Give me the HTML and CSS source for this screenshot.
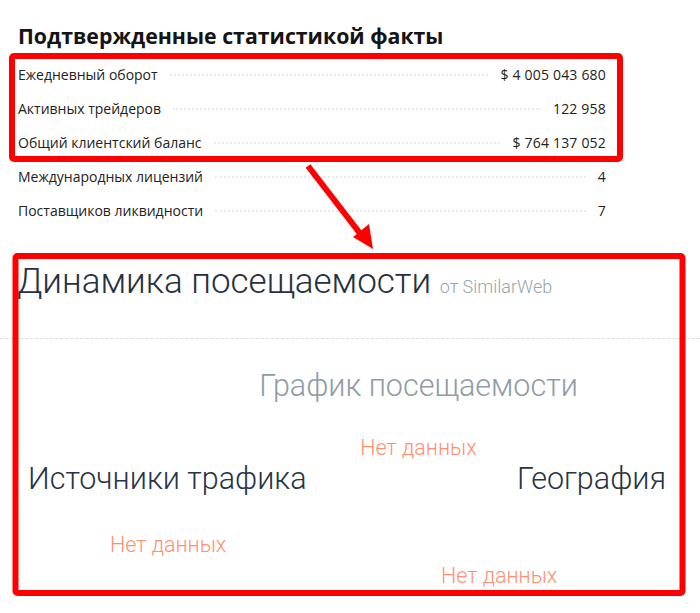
FILE: index.html
```html
<!DOCTYPE html>
<html lang="ru">

<head>
    <meta charset="UTF-8">
    <meta name="viewport" content="width=device-width, initial-scale=1.0">
    <title>Статистика брокера</title>
    <link rel="stylesheet" href="styles.css">
</head>

<body>
    <div class="facts">
        <h2 class="facts-title">Подтвержденные статистикой факты</h2>
        <ul class="facts-list">
            <li><span class="label">Ежедневный оборот</span><span class="leader"></span><span class="value">$ 4 005 043 680</span></li>
            <li><span class="label">Активных трейдеров</span><span class="leader"></span><span class="value">122 958</span></li>
            <li><span class="label">Общий клиентский баланс</span><span class="leader"></span><span class="value">$ 764 137 052</span></li>
            <li><span class="label">Международных лицензий</span><span class="leader"></span><span class="value">4</span></li>
            <li><span class="label">Поставщиков ликвидности</span><span class="leader"></span><span class="value">7</span></li>
        </ul>
    </div>

    <div class="traffic">
        <h2 class="traffic-title">Динамика посещаемости <small>от SimilarWeb</small></h2>
        <div class="traffic-body">
            <div class="chart-visits">
                <h3 class="block-title muted">График посещаемости</h3>
                <p class="no-data">Нет данных</p>
            </div>
            <div class="chart-pair">
                <h3 class="block-title">Источники трафика</h3>
                <h3 class="block-title">География</h3>
            </div>
            <p class="no-data sources-empty">Нет данных</p>
            <p class="no-data geo-empty">Нет данных</p>
        </div>
    </div>

    <!-- пометки поверх скриншота -->
    <svg class="marks" width="700" height="613" viewBox="0 0 700 613">
        <rect x="12" y="56" width="608" height="103" rx="2" />
        <rect x="15.5" y="256" width="667" height="337" rx="2" />
        <line x1="308" y1="166" x2="362" y2="236" />
        <polygon class="head" points="373,249 353,237 369,224" />
    </svg>
</body>

</html>
```

FILE: styles.css
```css
* {
    box-sizing: border-box;
}

body {
    margin: 0;
    background: #fff;
    position: relative;
    width: 700px;
    height: 613px;
    overflow: hidden;
}

/* блок фактов */
.facts {
    padding: 22px 0 0 18px;
    width: 606px;
    font-family: "Open Sans", sans-serif;
}

.facts-title {
    margin: 0;
    font-size: 21.3px;
    font-weight: 700;
    line-height: 28px;
    color: #141414;
}

.facts-list {
    list-style: none;
    margin: 7px 0 0;
    padding: 0;
}

.facts-list li {
    display: flex;
    align-items: center;
    height: 34px;
    font-size: 14px;
    color: #222;
}

.facts-list .value {
    letter-spacing: 0.2px;
}

.facts-list .leader {
    flex: 1;
    margin: 2px 12px 0;
    border-bottom: 2px dotted #e6ebf1;
}

/* динамика посещаемости */
.traffic {
    font-family: Roboto, sans-serif;
    font-weight: 300;
}

.traffic-title {
    margin: 34px 0 0 17px;
    font-size: 35px;
    font-weight: 300;
    line-height: 42px;
    color: #253140;
}

.traffic-title small {
    font-size: 18px;
    color: #9aa3aa;
}

.traffic-body {
    margin-top: 30px;
    border-top: 1px dashed #d3dde3;
    padding-top: 29px;
}

.block-title {
    margin: 0;
    font-size: 30.5px;
    font-weight: 300;
    line-height: 36px;
    color: #263445;
}

.block-title.muted {
    color: #8e9ca6;
}

.chart-visits {
    margin-left: 259px;
    width: 319px;
    text-align: center;
}

.no-data {
    margin: 0;
    font-size: 21.5px;
    line-height: 26px;
    color: #ff8f70;
}

.chart-visits .no-data {
    margin-top: 31px;
}

.chart-pair {
    display: flex;
    justify-content: space-between;
    padding: 0 34px 0 28px;
    margin-top: 0;
}

.sources-empty {
    margin: 35px 0 0 110px;
}

.geo-empty {
    margin: 5px 0 0 441px;
}

.marks {
    position: absolute;
    left: 0;
    top: 0;
    pointer-events: none;
}

.marks rect {
    fill: none;
    stroke: #ff0000;
    stroke-width: 6;
}

.marks line {
    stroke: #ff0000;
    stroke-width: 6;
}

.marks .head {
    fill: #ff0000;
}
```
